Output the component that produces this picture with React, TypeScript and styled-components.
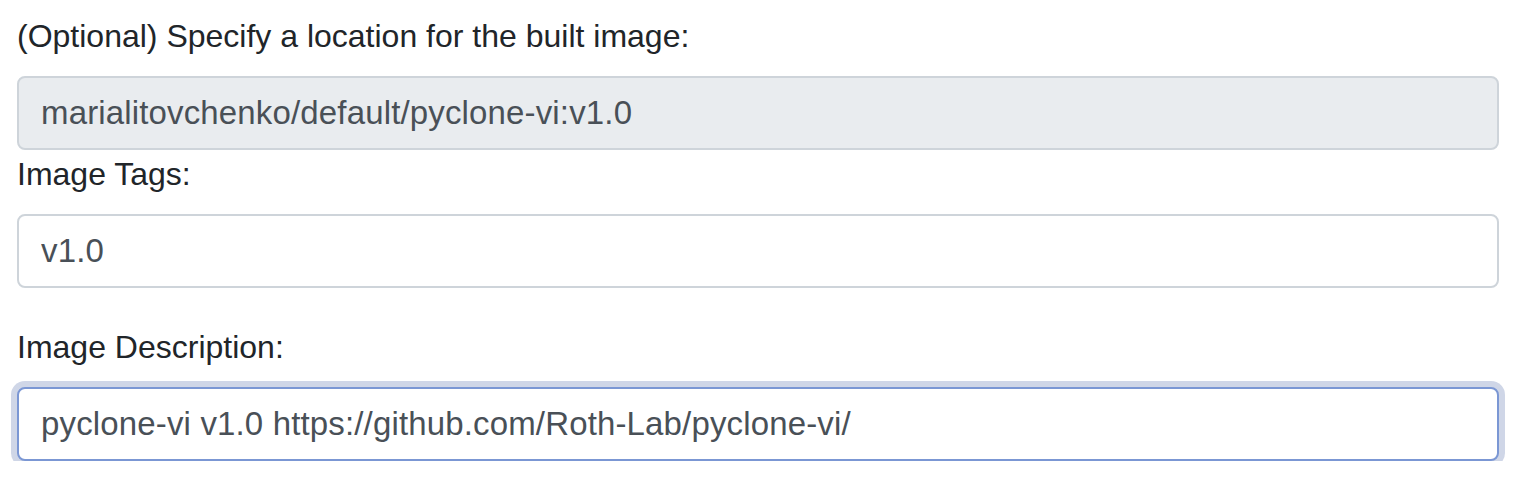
import React from "react";
import styled, { createGlobalStyle } from "styled-components";

const GlobalStyle = createGlobalStyle`
  html, body { margin: 0; padding: 0; background: #ffffff; }
  body { font-family: "Liberation Sans", Arial, Helvetica, sans-serif; }
  * { box-sizing: border-box; }
`;

const Form = styled.form`
  display: flex;
  flex-direction: column;
  padding: 12px 25px 0 17px;
`;

const Group = styled.div<{ $gap?: number }>`
  display: flex;
  flex-direction: column;
  margin-bottom: ${(p) => p.$gap ?? 0}px;
`;

const Label = styled.label`
  font-size: 32px;
  line-height: 48px;
  color: #212529;
  margin-bottom: 16px;
`;

const Input = styled.input<{ $focused?: boolean }>`
  display: block;
  width: 100%;
  height: 74px;
  padding: 0 22px;
  font-family: "Liberation Sans", Arial, Helvetica, sans-serif;
  font-size: 33px;
  letter-spacing: 0.15px;
  color: #495057;
  background: #ffffff;
  border: 2px solid ${(p) => (p.$focused ? "#7b97d4" : "#ced4da")};
  border-radius: 8px;
  outline: none;
  box-shadow: ${(p) => (p.$focused ? "0 0 0 6px #cfd6e7" : "none")};

  &:disabled {
    background: #e9ecef;
    color: #495057;
    opacity: 1;
  }
`;

export default function App() {
  return (
    <>
      <GlobalStyle />
      <Form onSubmit={(e) => e.preventDefault()}>
        <Group>
          <Label>(Optional) Specify a location for the built image:</Label>
          <Input disabled readOnly value="marialitovchenko/default/pyclone-vi:v1.0" />
        </Group>
        <Group $gap={35}>
          <Label>Image Tags:</Label>
          <Input readOnly value="v1.0" />
        </Group>
        <Group>
          <Label>Image Description:</Label>
          <Input $focused readOnly value="pyclone-vi v1.0 https://github.com/Roth-Lab/pyclone-vi/" />
        </Group>
      </Form>
    </>
  );
}
